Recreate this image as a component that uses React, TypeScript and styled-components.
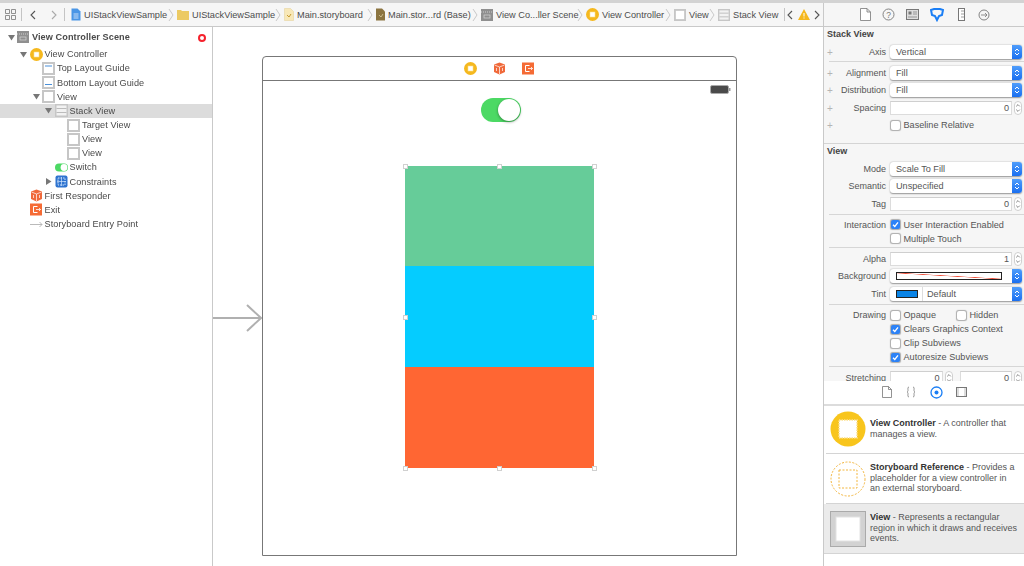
import React from 'react'
import styled, { createGlobalStyle } from 'styled-components'

const GlobalStyle = createGlobalStyle`
  html, body { margin: 0; padding: 0; background: #fff; }
  body { font-family: "Liberation Sans", Arial, sans-serif; font-size: 9.15px; color: #4a4a4a; }
`

const Page = styled.div`
  width: 1024px;
  height: 566px;
  overflow: hidden;
  display: flex;
  flex-direction: column;
  filter: blur(0.35px);
`
const TopStrip = styled.div`
  height: 3px;
  background: #d3d3d3;
  flex: none;
`
const Main = styled.div`
  flex: 1;
  display: flex;
  min-height: 0;
`
const EditorColumn = styled.div`
  width: 823px;
  flex: none;
  display: flex;
  flex-direction: column;
`

/* jump bar */
const JumpBar = styled.div`
  height: 23px;
  flex: none;
  display: flex;
  align-items: center;
  background: #f6f6f6;
  border-bottom: 1px solid #c9c9c9;
  padding-left: 5px;
  box-sizing: content-box;
`
const BarSep = styled.span<{ $l: number; $r: number }>`
  width: 1px;
  height: 13px;
  background: #c4c4c4;
  margin: 0 ${p => p.$r}px 0 ${p => p.$l}px;
  flex: none;
`
const NavChevron = styled.svg<{ $l: number; $r: number }>`
  width: 6px;
  height: 10px;
  flex: none;
  margin: 0 ${p => p.$r}px 0 ${p => p.$l}px;
`
const Crumb = styled.span<{ $w: number }>`
  width: ${p => p.$w}px;
  flex: none;
  white-space: nowrap;
  margin-left: 3px;
  font-size: 9.2px;
  color: #4c4c4c;
`
const CrumbSep = styled.svg`
  width: 12px;
  height: 14px;
  flex: none;
`

/* workspace */
const Workspace = styled.div`
  flex: 1;
  display: flex;
  min-height: 0;
`
const Navigator = styled.div`
  width: 212px;
  flex: none;
  border-right: 1px solid #c9c9c9;
  padding-top: 3px;
  letter-spacing: 0.08px;
`
const TreeRow = styled.div<{ $depth: number; $selected?: boolean; $title?: boolean }>`
  height: 14.17px;
  display: flex;
  align-items: center;
  padding-left: ${p => 5 + 12.5 * p.$depth}px;
  background: ${p => (p.$selected ? '#dcdcdc' : 'transparent')};
  font-weight: ${p => (p.$title ? 700 : 400)};
  margin-bottom: ${p => (p.$title ? '3px' : '0')};
  color: #4a4a4a;
  position: relative;
`
const Disclosure = styled.span`
  width: 12px;
  flex: none;
  display: flex;
  justify-content: center;
`
const TreeIcon = styled.span`
  width: 13px;
  height: 13px;
  flex: none;
  margin-right: 2px;
  display: flex;
`
const ErrorDot = styled.span`
  position: absolute;
  right: 6px;
  top: 3.5px;
  width: 4px;
  height: 4px;
  border: 2px solid #f5222d;
  background: #fff;
  border-radius: 50%;
`

const Canvas = styled.div`
  flex: 1;
  position: relative;
  background: #fff;
  padding: 29px 0 0 49px;
`
const EntryArrow = styled.svg`
  position: absolute;
  left: 0;
  top: 276px;
  width: 49px;
  height: 30px;
`
const SceneFrame = styled.div`
  width: 473px;
  height: 498px;
  border: 1px solid #777;
  border-radius: 4px 4px 0 0;
  display: flex;
  flex-direction: column;
`
const SceneDock = styled.div`
  height: 23px;
  flex: none;
  border-bottom: 1px solid #777;
  display: flex;
  align-items: center;
  justify-content: center;
  gap: 16px;
`
const SceneBody = styled.div`
  flex: 1;
  position: relative;
  display: flex;
  flex-direction: column;
  align-items: center;
  padding-top: 17px;
`
const BatteryIcon = styled.svg`
  position: absolute;
  top: 4px;
  right: 5px;
  width: 21px;
  height: 9px;
`
const Toggle = styled.div`
  width: 40px;
  height: 24px;
  box-sizing: border-box;
  border-radius: 12px;
  background: #4cd964;
  margin-left: 3px;
  margin-bottom: 44px;
  display: flex;
  justify-content: flex-end;
  padding: 1px;
  flex: none;
`
const ToggleKnob = styled.div`
  width: 22px;
  height: 22px;
  border-radius: 50%;
  background: #fff;
  box-shadow: 0 1px 3px rgba(0, 0, 0, 0.4);
`
const StackView = styled.div`
  width: 189px;
  height: 302px;
  position: relative;
  display: flex;
  flex-direction: column;
  flex: none;
`
const StackBlock = styled.div<{ $color: string; $h: number }>`
  height: ${p => p.$h}px;
  background: ${p => p.$color};
`
const Handle = styled.span<{ $x: number; $y: number }>`
  position: absolute;
  left: ${p => p.$x * 189 - 2.5}px;
  top: ${p => p.$y * 302 - 2.5}px;
  width: 3px;
  height: 3px;
  background: #fff;
  border: 1px solid #d0d0d0;
`

/* inspector */
const Inspector = styled.div`
  flex: 1;
  display: flex;
  flex-direction: column;
  border-left: 1px solid #c9c9c9;
  background: #f6f6f6;
  min-width: 0;
`
const InspectorTabs = styled.div`
  height: 23px;
  flex: none;
  box-sizing: content-box;
  border-bottom: 1px solid #c9c9c9;
  display: flex;
  align-items: center;
  padding-left: 36px;
  gap: 11px;
`
const SizeTab = styled.svg`
  width: 7px;
  height: 13px;
  margin: 0 2.5px;
`
const InspectorScroll = styled.div`
  height: 353.5px;
  flex: none;
  overflow: hidden;
`
const Section = styled.div<{ $h: number }>`
  height: ${p => p.$h}px;
  border-bottom: ${p => (p.$h < 200 ? '1px solid #d4d4d4' : 'none')};
`
const SectionTitle = styled.div`
  height: 15px;
  line-height: 14px;
  padding-left: 3px;
  font-weight: 700;
  font-size: 9px;
  color: #444;
  margin-bottom: 1.25px;
`
const FormRow = styled.div<{ $tight?: boolean }>`
  height: ${p => (p.$tight ? 14 : 17.5)}px;
  display: grid;
  grid-template-columns: 62px 1fr;
  column-gap: 4px;
  align-items: center;
  padding-right: 2px;
  position: relative;
`
const PlusMark = styled.span`
  position: absolute;
  left: 3px;
  top: 50%;
  transform: translateY(-50%);
  font-size: 10px;
  color: #b5b5b5;
`
const FieldLabel = styled.span`
  text-align: right;
  color: #555;
  font-size: 9px;
  white-space: nowrap;
`
const FieldBody = styled.div`
  display: flex;
  flex-direction: column;
  min-width: 0;
`
const CheckLine = styled.div`
  display: flex;
  align-items: center;
`
const Divider = styled.div<{ $top?: number; $bottom?: number }>`
  height: 1px;
  background: #d6d6d6;
  margin: ${p => p.$top ?? 2}px 0 ${p => p.$bottom ?? 2.5}px 5px;
`
const Popup = styled.div`
  height: 14px;
  box-sizing: border-box;
  border-radius: 3px;
  background: #fff;
  box-shadow: 0 0.5px 1.5px rgba(0, 0, 0, 0.4);
  display: flex;
  align-items: center;
  padding-left: 6px;
  overflow: hidden;
  color: #555;
`
const PopupText = styled.span`
  flex: 1;
  white-space: nowrap;
`
const PopupCap = styled.span`
  width: 10px;
  height: 14px;
  flex: none;
  background: linear-gradient(#4f9dfb, #1a6ff0);
  display: flex;
  align-items: center;
  justify-content: center;
`
const FieldLine = styled.div`
  display: flex;
  flex: 1;
  min-width: 0;
  align-items: center;
  gap: 2px;
`
const StretchLine = styled.div`
  display: flex;
  gap: 7px;
`
const NumberField = styled.div`
  flex: 1;
  min-width: 0;
  height: 14px;
  box-sizing: border-box;
  background: #fff;
  border: 1px solid #dcdcdc;
  border-top-color: #cfcfcf;
  text-align: right;
  padding-right: 2px;
  line-height: 12px;
  color: #555;
`
const Stepper = styled.svg`
  width: 8px;
  height: 14px;
  flex: none;
`
const Check = styled.label`
  display: inline-flex;
  align-items: center;
  gap: 4px;
  color: #555;
  white-space: nowrap;
  width: 69px;
`
const CheckBox = styled.span<{ $on?: boolean }>`
  width: 9px;
  height: 9px;
  border-radius: 2px;
  flex: none;
  background: ${p => (p.$on ? '#2c82f7' : '#fff')};
  box-shadow: 0 0 1px 0.5px rgba(0, 0, 0, 0.3);
  display: flex;
  margin-left: 0.5px;
`
const ColorSwatch = styled.span<{ $w: number }>`
  width: ${p => p.$w}px;
  height: 6px;
  flex: none;
  border: 1px solid #222;
  display: block;
`
const NoColor = styled(ColorSwatch)`
  background: linear-gradient(
    to top right,
    #fff calc(50% - 0.6px),
    #f0503a 50%,
    #fff calc(50% + 0.6px)
  );
`
const TintDivider = styled.span`
  width: 1px;
  height: 14px;
  background: #ddd;
  margin: 0 4px;
  flex: none;
`
const BlueSwatch = styled(ColorSwatch)`
  background: #0a84e6;
`

/* library */
const Library = styled.div`
  flex: 1;
  background: #fff;
  display: flex;
  flex-direction: column;
`
const LibraryTabs = styled.div`
  height: 23px;
  flex: none;
  border-bottom: 2px solid #dcdcdc;
  display: flex;
  align-items: center;
  justify-content: center;
  gap: 13px;
`
const LibraryItem = styled.div<{ $selected?: boolean; $h: number }>`
  height: ${p => p.$h}px;
  box-sizing: border-box;
  display: flex;
  align-items: center;
  padding: 0 6px;
  gap: 4px;
  background: ${p => (p.$selected ? '#ebebeb' : '#fff')};
  border-bottom: 1px solid #d4d4d4;
  margin-left: ${p => (p.$selected ? 0 : 2)}px;
  padding-left: ${p => (p.$selected ? 6 : 4)}px;
`
const LibraryIcon = styled.svg`
  width: 36px;
  height: 36px;
  flex: none;
`
const LibraryText = styled.div`
  line-height: 10.5px;
  font-size: 9px;
  color: #555;
  margin-top: -1px;
  b {
    color: #333;
  }
`

const Chevron = ({ dir, l, r, color = '#555' }: { dir: 'l' | 'r'; l: number; r: number; color?: string }) => (
  <NavChevron viewBox="0 0 6 10" $l={l} $r={r}>
    <path d={dir === 'l' ? 'M5 1 1 5l4 4' : 'M1 1l4 4-4 4'} fill="none" stroke={color} strokeWidth="1.1" />
  </NavChevron>
)

const Sep = () => (
  <CrumbSep viewBox="0 0 12 14">
    <path d="M4 1l4 6-4 6" fill="none" stroke="#bdbdbd" strokeWidth="0.8" />
  </CrumbSep>
)

const Tri = ({ open = true }: { open?: boolean }) => (
  <svg width="7" height="7" viewBox="0 0 7 7">
    <path d={open ? 'M0 1h7L3.5 6.5z' : 'M1 0v7l5.5-3.5z'} fill="#777" />
  </svg>
)

const ViewGlyph = ({ size = 13 }: { size?: number }) => (
  <svg width={size} height={size} viewBox="0 0 13 13">
    <rect x="0" y="0" width="13" height="13" fill="#c6c6c6" />
    <rect x="2" y="2" width="9" height="9" fill="#fff" />
  </svg>
)
const GuideGlyph = ({ bottom = false }: { bottom?: boolean }) => (
  <svg width="13" height="13" viewBox="0 0 13 13">
    <rect x="0" y="0" width="13" height="13" fill="#c6c6c6" />
    <rect x="2" y="2" width="9" height="9" fill="#fff" />
    <rect x="3" y={bottom ? 8 : 3.5} width="7" height="1" fill="#4a90d9" />
  </svg>
)
const StackGlyph = ({ size = 13 }: { size?: number }) => (
  <svg width={size} height={size} viewBox="0 0 13 13">
    <rect x="0" y="0" width="13" height="13" fill="#c6c6c6" />
    <rect x="1.5" y="1.5" width="10" height="10" fill="#f2f2f2" />
    <path d="M1.5 4.5h10M1.5 8.5h10" stroke="#bcbcbc" />
  </svg>
)
const VcGlyph = ({ size = 13 }: { size?: number }) => (
  <svg width={size} height={size} viewBox="0 0 13 13">
    <circle cx="6.5" cy="6.5" r="6.5" fill="#f5b81e" />
    <rect x="4" y="4" width="5" height="5" fill="#fff" stroke="#fbe08a" strokeWidth="0.6" />
  </svg>
)
const CubeGlyph = ({ size = 13 }: { size?: number }) => (
  <svg width={size} height={size} viewBox="0 0 13 13">
    <path d="M6.5 0.5 12 2.5v7.5L6.5 12.5 1 10V2.5z" fill="#f0693a" />
    <path d="M1.5 3 6.5 5l5-2M6.5 5v7M3.5 6v3M9.5 6v3" fill="none" stroke="#fff" strokeWidth="0.7" />
  </svg>
)
const ExitGlyph = ({ size = 13 }: { size?: number }) => (
  <svg width={size} height={size} viewBox="0 0 13 13">
    <rect width="12" height="12" y="0.5" fill="#f56b35" />
    <path d="M7.5 3.5h-4v6h4" fill="none" stroke="#fff" />
    <path d="M6 6.5h4.5M9 5l1.5 1.5L9 8" fill="none" stroke="#fff" strokeWidth="0.8" />
  </svg>
)
const SwitchGlyph = () => (
  <svg width="13" height="13" viewBox="0 0 13 13">
    <rect y="2.5" width="13" height="8" rx="4" fill="#4cd964" />
    <circle cx="9" cy="6.5" r="3.4" fill="#fff" />
  </svg>
)
const ConstraintsGlyph = () => (
  <svg width="13" height="13" viewBox="0 0 13 13">
    <rect x="0.5" y="0.5" width="12" height="12" rx="2" fill="#2f74d0" />
    <rect x="3" y="3" width="7" height="7" fill="none" stroke="#cfe2fa" strokeDasharray="1.5 1" />
    <path d="M6.5 2v9M2 6.5h9" stroke="#cfe2fa" strokeWidth="0.7" />
  </svg>
)
const EntryGlyph = () => (
  <svg width="13" height="13" viewBox="0 0 13 13">
    <path d="M0 6.5h12M9.5 4l2.5 2.5L9.5 9" fill="none" stroke="#a8a8a8" strokeWidth="0.8" />
  </svg>
)

const Updown = () => (
  <svg width="6" height="10" viewBox="0 0 6 10">
    <path d="M1 4l2-2 2 2M1 6l2 2 2-2" fill="none" stroke="#fff" strokeWidth="1" />
  </svg>
)
const Step = () => (
  <Stepper viewBox="0 0 8 14">
    <rect x="0.5" y="0.5" width="7" height="13" rx="3.5" fill="#fff" stroke="#d0d0d0" />
    <path d="M2.2 5.4 4 3.6l1.8 1.8M2.2 8.6 4 10.4l1.8-1.8" fill="none" stroke="#555" strokeWidth="0.7" />
  </Stepper>
)
const Tick = () => (
  <svg width="9" height="9" viewBox="0 0 9 9">
    <path d="M2 4.7l1.8 1.8L7 2.4" fill="none" stroke="#fff" strokeWidth="1.3" />
  </svg>
)

const CheckItem = ({ on, children }: { on?: boolean; children: React.ReactNode }) => (
  <Check>
    <CheckBox $on={on}>{on && <Tick />}</CheckBox>
    {children}
  </Check>
)

const Select = ({ value }: { value: string }) => (
  <Popup>
    <PopupText>{value}</PopupText>
    <PopupCap>
      <Updown />
    </PopupCap>
  </Popup>
)

const Field = ({ label, plus, children, tight }: { label?: string; plus?: boolean; children?: React.ReactNode; tight?: boolean }) => (
  <FormRow $tight={tight}>
    {plus && <PlusMark>+</PlusMark>}
    <FieldLabel>{label}</FieldLabel>
    <FieldBody>{children}</FieldBody>
  </FormRow>
)

const NumberInput = ({ value }: { value: string }) => (
  <FieldLine>
    <NumberField>{value}</NumberField>
    <Step />
  </FieldLine>
)

type TreeItem = {
  label: string
  depth: number
  icon: React.ReactNode
  tri?: 'open' | 'closed'
  selected?: boolean
}

const tree: TreeItem[] = [
  { label: 'View Controller', depth: 1, icon: <VcGlyph />, tri: 'open' },
  { label: 'Top Layout Guide', depth: 2, icon: <GuideGlyph /> },
  { label: 'Bottom Layout Guide', depth: 2, icon: <GuideGlyph bottom /> },
  { label: 'View', depth: 2, icon: <ViewGlyph />, tri: 'open' },
  { label: 'Stack View', depth: 3, icon: <StackGlyph />, tri: 'open', selected: true },
  { label: 'Target View', depth: 4, icon: <ViewGlyph /> },
  { label: 'View', depth: 4, icon: <ViewGlyph /> },
  { label: 'View', depth: 4, icon: <ViewGlyph /> },
  { label: 'Switch', depth: 3, icon: <SwitchGlyph /> },
  { label: 'Constraints', depth: 3, icon: <ConstraintsGlyph />, tri: 'closed' },
  { label: 'First Responder', depth: 1, icon: <CubeGlyph /> },
  { label: 'Exit', depth: 1, icon: <ExitGlyph /> },
  { label: 'Storyboard Entry Point', depth: 1, icon: <EntryGlyph /> },
]

const crumbs: { icon: React.ReactNode; label: string; w: number }[] = [
  {
    icon: (
      <svg width="10" height="13" viewBox="0 0 10 13">
        <path d="M0.5 0.5h6l3 3v9h-9z" fill="#4a96e6" />
        <path d="M2.5 6h5M2.5 8h5M2.5 10h5" stroke="#fff" strokeWidth="0.7" />
      </svg>
    ),
    label: 'UIStackViewSample',
    w: 81,
  },
  {
    icon: (
      <svg width="12" height="11" viewBox="0 0 12 11">
        <path d="M0 1h4l1 1h7v9H0z" fill="#ecca63" />
      </svg>
    ),
    label: 'UIStackViewSample',
    w: 80,
  },
  {
    icon: (
      <svg width="10" height="13" viewBox="0 0 10 13">
        <path d="M0.5 0.5h6l3 3v9h-9z" fill="#f8e8b8" stroke="#e3cf94" strokeWidth="0.5" />
        <path d="M3 7l2 2 2-3" fill="none" stroke="#c79a2c" />
      </svg>
    ),
    label: 'Main.storyboard',
    w: 67,
  },
  {
    icon: (
      <svg width="9" height="13" viewBox="0 0 9 13">
        <path d="M0 0.5h6l3 3v9H0z" fill="#8b7440" />
        <path d="M3 7l2 2 2-3" fill="none" stroke="#e3d6a8" strokeWidth="0.7" />
      </svg>
    ),
    label: 'Main.stor...rd (Base)',
    w: 81,
  },
  {
    icon: (
      <svg width="12" height="12" viewBox="0 0 12 12">
        <rect width="12" height="12" fill="#8f8f8f" />
        <path d="M0 3h12" stroke="#cfcfcf" strokeDasharray="1 1" />
        <rect x="3" y="6" width="6" height="3" fill="none" stroke="#d8d8d8" strokeWidth="0.7" />
      </svg>
    ),
    label: 'View Co...ller Scene',
    w: 78,
  },
  { icon: <VcGlyph size={13} />, label: 'View Controller', w: 60 },
  { icon: <ViewGlyph size={12} />, label: 'View', w: 17 },
  { icon: <StackGlyph size={12} />, label: 'Stack View', w: 46 },
]

const handles: [number, number][] = [
  [0, 0],
  [0.5, 0],
  [1, 0],
  [0, 0.5],
  [1, 0.5],
  [0, 1],
  [0.5, 1],
  [1, 1],
]

const App: React.FC = () => {
  return (
    <Page>
      <GlobalStyle />
      <TopStrip />
      <Main>
        <EditorColumn>
          <JumpBar>
            <svg width="11" height="11" viewBox="0 0 11 11">
              <path d="M.5.5h4v4h-4zM6.5.5h4v4h-4zM.5 6.5h4v4h-4zM6.5 6.5h4v4h-4z" fill="none" stroke="#777" strokeWidth="0.8" />
            </svg>
            <BarSep $l={5} $r={8} />
            <Chevron dir="l" l={0} r={0} />
            <Chevron dir="r" l={15} r={0} color="#aaa" />
            <BarSep $l={7} $r={6} />
            {crumbs.map((c, i) => (
              <React.Fragment key={i}>
                {c.icon}
                <Crumb $w={c.w}>{c.label}</Crumb>
                {i < crumbs.length - 1 && <Sep />}
              </React.Fragment>
            ))}
            <BarSep $l={5} $r={2} />
            <Chevron dir="l" l={0} r={5} />
            <svg width="12" height="11" viewBox="0 0 12 11">
              <path d="M6 0l6 11H0z" fill="#f5b81e" />
              <path d="M6 4v3.5M6 8.5v1" stroke="#fff" />
            </svg>
            <Chevron dir="r" l={4} r={0} />
          </JumpBar>
          <Workspace>
            <Navigator>
              <TreeRow $depth={0} $title>
                <Disclosure>
                  <Tri />
                </Disclosure>
                <TreeIcon>
                  <svg width="12" height="12" viewBox="0 0 12 12">
                    <rect width="12" height="12" fill="#8f8f8f" />
                    <path d="M0 3h12" stroke="#cfcfcf" strokeDasharray="1 1" />
                    <rect x="3" y="6" width="6" height="3" fill="none" stroke="#d8d8d8" strokeWidth="0.7" />
                  </svg>
                </TreeIcon>
                View Controller Scene
                <ErrorDot />
              </TreeRow>
              {tree.map((t, i) => (
                <TreeRow key={i} $depth={t.depth} $selected={t.selected}>
                  <Disclosure>{t.tri && <Tri open={t.tri === 'open'} />}</Disclosure>
                  <TreeIcon>{t.icon}</TreeIcon>
                  {t.label}
                </TreeRow>
              ))}
            </Navigator>
            <Canvas>
              <EntryArrow viewBox="0 0 49 30">
                <path d="M0 15h47M34 2l14 13-14 13" fill="none" stroke="#b0b0b0" strokeWidth="2" />
              </EntryArrow>
              <SceneFrame>
                <SceneDock>
                  <VcGlyph />
                  <CubeGlyph />
                  <ExitGlyph />
                </SceneDock>
                <SceneBody>
                  <BatteryIcon viewBox="0 0 21 9">
                    <rect x="0.5" y="0.5" width="18" height="8" rx="1.5" fill="#4a4a4a" stroke="#aaa" />
                    <rect x="19" y="3" width="1.5" height="3" fill="#999" />
                  </BatteryIcon>
                  <Toggle>
                    <ToggleKnob />
                  </Toggle>
                  <StackView>
                    <StackBlock $color="#66cc99" $h={100} />
                    <StackBlock $color="#05ccff" $h={101} />
                    <StackBlock $color="#ff6633" $h={101} />
                    {handles.map(([x, y], i) => (
                      <Handle key={i} $x={x} $y={y} />
                    ))}
                  </StackView>
                </SceneBody>
              </SceneFrame>
            </Canvas>
          </Workspace>
        </EditorColumn>

        <Inspector>
          <InspectorTabs>
            <svg width="11" height="13" viewBox="0 0 11 13">
              <path d="M.5.5h6.5l3.5 3.5v8.5H.5zM7 .5V4h3.5" fill="#fff" stroke="#777" strokeWidth="0.8" />
            </svg>
            <svg width="13" height="13" viewBox="0 0 13 13">
              <circle cx="6.5" cy="6.5" r="5.5" fill="none" stroke="#777" strokeWidth="0.9" />
              <text x="6.5" y="9.5" fontSize="8.5" textAnchor="middle" fill="#777" fontFamily="Liberation Sans">?</text>
            </svg>
            <svg width="13" height="11" viewBox="0 0 13 11">
              <rect x="0.5" y="0.5" width="12" height="10" fill="#ddd" stroke="#777" />
              <rect x="2.5" y="2.5" width="3" height="3" fill="#777" />
              <path d="M7 3h4M7 5h4M2 8h9" stroke="#777" strokeWidth="0.7" />
            </svg>
            <svg width="14" height="14" viewBox="0 0 14 14">
              <path d="M1 2 4 1h6l3 1-1 5-3 1-2 4-2-4-3-1z" fill="none" stroke="#1a7ef5" strokeWidth="2" />
            </svg>
            <SizeTab viewBox="0 0 7 13">
              <rect x="0.5" y="0.5" width="6" height="12" fill="#fff" stroke="#777" />
              <path d="M3 3h3M3 6h3M3 9h3" stroke="#777" strokeWidth="0.7" />
            </SizeTab>
            <svg width="12" height="12" viewBox="0 0 12 12">
              <circle cx="6" cy="6" r="5" fill="none" stroke="#777" strokeWidth="0.9" />
              <path d="M3 6h6M7 4l2 2-2 2" fill="none" stroke="#777" strokeWidth="0.8" />
            </svg>
          </InspectorTabs>
          <InspectorScroll>
            <Section $h={115.5}>
              <SectionTitle>Stack View</SectionTitle>
              <Field label="Axis" plus>
                <Select value="Vertical" />
              </Field>
              <Divider $top={0.5} $bottom={1.5} />
              <Field label="Alignment" plus>
                <Select value="Fill" />
              </Field>
              <Field label="Distribution" plus>
                <Select value="Fill" />
              </Field>
              <Field label="Spacing" plus>
                <NumberInput value="0" />
              </Field>
              <Field plus>
                <CheckItem>Baseline Relative</CheckItem>
              </Field>
            </Section>
            <Section $h={240}>
              <SectionTitle>View</SectionTitle>
              <Field label="Mode">
                <Select value="Scale To Fill" />
              </Field>
              <Field label="Semantic">
                <Select value="Unspecified" />
              </Field>
              <Field label="Tag">
                <NumberInput value="0" />
              </Field>
              <Divider />
              <Field label="Interaction" tight>
                <CheckItem on>User Interaction Enabled</CheckItem>
              </Field>
              <Field tight>
                <CheckItem>Multiple Touch</CheckItem>
              </Field>
              <Divider $top={1.5} $bottom={1.75} />
              <Field label="Alpha">
                <NumberInput value="1" />
              </Field>
              <Field label="Background">
                <Popup>
                  <PopupText>
                    <NoColor $w={104} />
                  </PopupText>
                  <PopupCap>
                    <Updown />
                  </PopupCap>
                </Popup>
              </Field>
              <Field label="Tint">
                <Popup>
                  <BlueSwatch $w={20} />
                  <TintDivider />
                  <PopupText>Default</PopupText>
                  <PopupCap>
                    <Updown />
                  </PopupCap>
                </Popup>
              </Field>
              <Divider $top={1.75} $bottom={3} />
              <Field label="Drawing" tight>
                <CheckLine>
                  <CheckItem>Opaque</CheckItem>
                  <CheckItem>Hidden</CheckItem>
                </CheckLine>
              </Field>
              <Field tight>
                <CheckItem on>Clears Graphics Context</CheckItem>
              </Field>
              <Field tight>
                <CheckItem>Clip Subviews</CheckItem>
              </Field>
              <Field tight>
                <CheckItem on>Autoresize Subviews</CheckItem>
              </Field>
              <Divider $top={1.5} $bottom={2.75} />
              <Field label="Stretching">
                <StretchLine>
                  <NumberInput value="0" />
                  <NumberInput value="0" />
                </StretchLine>
              </Field>
            </Section>
          </InspectorScroll>
          <Library>
            <LibraryTabs>
              <svg width="10" height="12" viewBox="0 0 10 12">
                <path d="M.5.5h6l3 3v8h-9zM6.5.5v3h3" fill="#fff" stroke="#777" strokeWidth="0.8" />
              </svg>
              <svg width="12" height="12" viewBox="0 0 12 12">
                <path d="M4 1C2.5 1 3 3 3 4.500 3 5.500 2 6 2 6s1 .5 1 1.500C3 9 2.500 11 4 11M8 1c1.500 0 1 2 1 3.500C9 5.500 10 6 10 6s-1 .5-1 1.500C9 9 9.500 11 8 11" fill="none" stroke="#777" strokeWidth="0.8" />
              </svg>
              <svg width="13" height="13" viewBox="0 0 13 13">
                <circle cx="6.5" cy="6.5" r="5.5" fill="none" stroke="#1a7ef5" strokeWidth="1.3" />
                <circle cx="6.5" cy="6.5" r="2" fill="#1a7ef5" />
              </svg>
              <svg width="11" height="10" viewBox="0 0 11 10">
                <rect x="0.5" y="0.5" width="10" height="9" fill="#ddd" stroke="#777" />
                <rect x="3" y="1" width="5" height="8" fill="#fff" />
              </svg>
            </LibraryTabs>
            <LibraryItem $h={48.5}>
              <LibraryIcon viewBox="0 0 36 36">
                <circle cx="18" cy="18" r="17.5" fill="#f8c51c" />
                <rect x="9" y="9" width="18" height="18" fill="#fff" stroke="#fbe08a" strokeWidth="1.5" strokeDasharray="1.5 1" />
              </LibraryIcon>
              <LibraryText>
                <b>View Controller</b> - A controller that manages a view.
              </LibraryText>
            </LibraryItem>
            <LibraryItem $h={50}>
              <LibraryIcon viewBox="0 0 36 36">
                <circle cx="18" cy="18" r="17" fill="#fff" stroke="#f3b63f" strokeDasharray="2 1.5" />
                <rect x="9" y="9" width="18" height="18" fill="#fff" stroke="#f3b63f" strokeDasharray="2 1.5" />
              </LibraryIcon>
              <LibraryText>
                <b>Storyboard Reference</b> - Provides a placeholder for a view controller in an external storyboard.
              </LibraryText>
            </LibraryItem>
            <LibraryItem $h={50} $selected>
              <LibraryIcon viewBox="0 0 36 36">
                <rect x="0.5" y="0.5" width="35" height="35" fill="#d2d2d2" stroke="#aaa" />
                <rect x="6" y="6" width="24" height="24" fill="#fff" stroke="#e2e2e2" />
              </LibraryIcon>
              <LibraryText>
                <b>View</b> - Represents a rectangular region in which it draws and receives events.
              </LibraryText>
            </LibraryItem>
          </Library>
        </Inspector>
      </Main>
    </Page>
  )
}

export default App
